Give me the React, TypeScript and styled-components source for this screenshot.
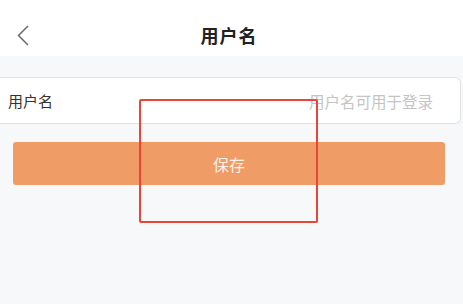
import React from "react";
import styled, { createGlobalStyle } from "styled-components";

const GlobalStyle = createGlobalStyle`
  html, body {
    margin: 0;
    padding: 0;
    background: #f7f8fa;
  }
  body {
    font-family: "Noto Sans CJK SC", "Noto Sans", sans-serif;
  }
`;

function BackIcon() {
  return (
    <svg width="12" height="21" viewBox="0 0 12 21" fill="none">
      <path d="M11 1 L1.5 10.5 L11 20" stroke="#6b6b6b" strokeWidth="1.5" />
    </svg>
  );
}

function App() {
  return (
    <>
      <GlobalStyle />
      <Page>
        <Header>
          <BackButton>
            <BackIcon />
          </BackButton>
          <Title>用户名</Title>
        </Header>
        <Body>
          <FieldRow>
            <Label>用户名</Label>
            <Input placeholder="用户名可用于登录" />
          </FieldRow>
          <SaveButton>保存</SaveButton>
        </Body>
        <Highlight />
      </Page>
    </>
  );
}

export default App;

const Page = styled.div`
  position: relative;
  width: 463px;
  height: 304px;
  overflow: hidden;
  background: #f7f8fa;
`;

const Header = styled.div`
  position: relative;
  height: 56px;
  background: #ffffff;
  display: flex;
  align-items: center;
  justify-content: center;
`;

const BackButton = styled.div`
  position: absolute;
  left: 17px;
  top: 25px;
  display: flex;
`;

const Title = styled.div`
  font-size: 18px;
  font-weight: 700;
  letter-spacing: 1px;
  color: #222222;
  margin-top: 14px;
  margin-left: -5px;
`;

const Body = styled.div`
  padding-top: 21px;
  display: flex;
  flex-direction: column;
`;

const FieldRow = styled.div`
  height: 45px;
  margin-right: 2px;
  display: flex;
  align-items: center;
  justify-content: space-between;
  padding: 0 27px 0 8px;
  background: #ffffff;
  border: 1px solid #e2e2e2;
  border-left: none;
  border-radius: 0 6px 6px 0;
`;

const Label = styled.span`
  font-size: 15px;
  color: #333333;
`;

const Input = styled.input`
  border: none;
  outline: none;
  background: transparent;
  text-align: right;
  width: 200px;
  padding: 0;
  font-family: inherit;
  font-size: 15.5px;
  color: #333333;
  &::placeholder {
    color: #c4c4c4;
  }
`;

const SaveButton = styled.button`
  margin: 18px 18px 0 13px;
  height: 43px;
  border: none;
  border-radius: 3px;
  background: #ef9c66;
  color: #fdf1e8;
  font-family: inherit;
  font-size: 16px;
  padding: 0;
`;

const Highlight = styled.div`
  position: absolute;
  left: 139px;
  top: 99px;
  width: 175px;
  height: 120px;
  border: 2.5px solid #ea4538;
  border-radius: 2px;
  pointer-events: none;
`;
